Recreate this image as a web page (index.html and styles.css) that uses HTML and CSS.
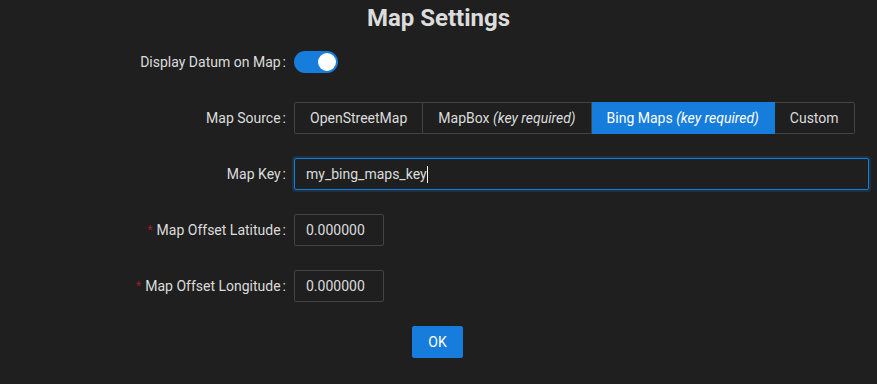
FILE: index.html
```html
<!DOCTYPE html>
<html lang="en">
<head>
<meta charset="utf-8">
<title>Map Settings</title>
<link rel="stylesheet" href="styles.css">
</head>
<body>
<div class="page">
  <h1 class="title">Map Settings</h1>
  <form class="form">
    <div class="row">
      <label class="label">Display Datum on Map</label>
      <div class="control">
        <span class="switch"><span class="knob"></span></span>
      </div>
    </div>
    <div class="row">
      <label class="label">Map Source</label>
      <div class="control">
        <div class="radio-group">
          <span class="radio-btn">OpenStreetMap</span>
          <span class="radio-btn">MapBox&nbsp;<em>(key required)</em></span>
          <span class="radio-btn checked">Bing Maps&nbsp;<em>(key required)</em></span>
          <span class="radio-btn">Custom</span>
        </div>
      </div>
    </div>
    <div class="row">
      <label class="label">Map Key</label>
      <div class="control">
        <div class="input focused">my_bing_maps_key<span class="caret"></span></div>
      </div>
    </div>
    <div class="row">
      <label class="label required">Map Offset Latitude</label>
      <div class="control">
        <div class="input number">0.000000</div>
      </div>
    </div>
    <div class="row">
      <label class="label required">Map Offset Longitude</label>
      <div class="control">
        <div class="input number">0.000000</div>
      </div>
    </div>
    <div class="actions">
      <button type="button" class="btn-primary">OK</button>
    </div>
  </form>
</div>
</body>
</html>
```
FILE: styles.css
```css
html, body {
  margin: 0;
  padding: 0;
  background: #1f1f1f;
}
body {
  font-family: Roboto, "Liberation Sans", Arial, sans-serif;
  font-size: 14px;
  color: rgba(255, 255, 255, 0.85);
  width: 877px;
  height: 384px;
  overflow: hidden;
}
.title {
  margin: 0 0 10px 0;
  height: 36px;
  line-height: 36px;
  font-size: 24px;
  font-weight: 700;
  text-align: center;
  color: rgba(255, 255, 255, 0.85);
}
.form {
  display: flex;
  flex-direction: column;
}
.row {
  display: grid;
  grid-template-columns: 294px 1fr;
  height: 32px;
  margin: 0 8px 24px 0;
}
.label {
  display: flex;
  align-items: center;
  justify-content: flex-end;
  white-space: nowrap;
  color: rgba(255, 255, 255, 0.85);
}
.label::after {
  content: ":";
  margin: 0 8px 0 2px;
  position: relative;
  top: -0.5px;
}
.label.required::before {
  content: "*";
  color: #a61d24;
  margin-right: 4px;
  font-family: "Liberation Sans", sans-serif;
  font-size: 14px;
}
.control {
  display: flex;
  align-items: center;
}
.switch {
  position: relative;
  display: inline-block;
  width: 44px;
  height: 22px;
  border-radius: 11px;
  background: #177ddc;
}
.knob {
  position: absolute;
  top: 2px;
  right: 2px;
  width: 18px;
  height: 18px;
  border-radius: 50%;
  background: #fff;
}
.radio-group {
  display: flex;
  height: 32px;
}
.radio-btn {
  display: flex;
  align-items: center;
  height: 32px;
  box-sizing: border-box;
  padding: 0 15px;
  border: 1px solid #434343;
  border-left-width: 0;
  color: rgba(255, 255, 255, 0.85);
  white-space: nowrap;
}
.radio-btn:first-child {
  border-left-width: 1px;
  border-radius: 2px 0 0 2px;
}
.radio-btn:last-child {
  border-radius: 0 2px 2px 0;
}
.radio-btn em {
  font-style: italic;
}
.radio-btn.checked {
  background: #177ddc;
  border-color: #177ddc;
  color: #fff;
}
.input {
  box-sizing: border-box;
  height: 32px;
  width: 100%;
  padding: 0 11px;
  border: 1px solid #434343;
  border-radius: 2px;
  display: flex;
  align-items: center;
  color: rgba(255, 255, 255, 0.85);
  background: transparent;
}
.input.focused {
  border-color: #177ddc;
  box-shadow: 0 0 0 2px rgba(23, 125, 220, 0.2);
}
.input.number {
  width: 90px;
}
.caret {
  display: inline-block;
  width: 1px;
  height: 17px;
  background: #fff;
}
.actions {
  display: flex;
  justify-content: center;
  padding-right: 2px;
}
.btn-primary {
  height: 32px;
  padding: 0 15px;
  border: 1px solid #177ddc;
  border-radius: 2px;
  background: #177ddc;
  color: #fff;
  font-family: Roboto, "Liberation Sans", Arial, sans-serif;
  font-size: 14px;
  cursor: pointer;
}
```
